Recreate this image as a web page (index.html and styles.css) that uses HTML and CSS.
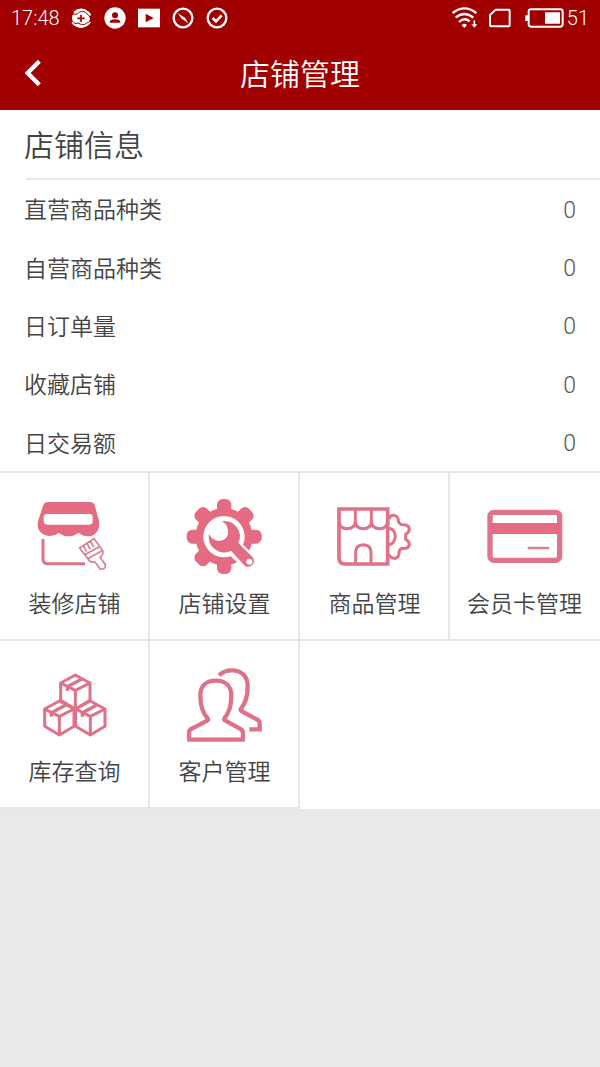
FILE: index.html
```html
<!DOCTYPE html>
<html lang="zh-CN">
<head>
<meta charset="utf-8">
<meta name="viewport" content="width=device-width, initial-scale=1">
<title>店铺管理</title>
<link rel="stylesheet" href="styles.css">
</head>
<body>
<header class="top">
  <div class="status">
    <span class="clock">17:48</span>
    <div class="notices">
      <svg class="notice" viewBox="0 0 66 66" aria-hidden="true"><circle cx="33" cy="33" r="27" fill="#fff"/><path d="M0 27Q8 20 22 21Q34 8 46 16Q56 22 66 40M0 36Q12 54 24 48Q40 58 50 48Q60 46 66 40" fill="none" stroke="#a00000" stroke-width="3"/><path d="M12 16Q26 3 44 9Q55 14 62 25M6 46Q20 63 38 60Q52 57 61 46" fill="none" stroke="#fff" stroke-width="5"/><path d="M33 23V45M22 34H44" stroke="#a00000" stroke-width="5"/></svg>
      <svg class="notice" viewBox="0 0 66 66" aria-hidden="true"><circle cx="33" cy="33" r="32" fill="#fff"/><circle cx="33" cy="25" r="9" fill="#a00000"/><path d="M17 47V44Q20 37 33 37Q46 37 49 44V47Z" fill="#a00000"/></svg>
      <svg class="notice" viewBox="0 0 66 66" aria-hidden="true"><path d="M0 5H66V61H0Z" fill="#fff"/><path d="M23 20L47 33L23 46Z" fill="#a00000"/></svg>
      <svg class="notice" viewBox="0 0 66 66" aria-hidden="true"><circle cx="33" cy="33" r="28" fill="none" stroke="#fff" stroke-width="7"/><path d="M17 18L39 32L49 48L29 35Z" fill="#fff"/></svg>
      <svg class="notice" viewBox="0 0 66 66" aria-hidden="true"><circle cx="33" cy="33" r="28" fill="none" stroke="#fff" stroke-width="7"/><path d="M20 33L30 43L47 25" fill="none" stroke="#fff" stroke-width="8"/></svg>
    </div>
    <div class="system">
      <svg class="wifi" viewBox="0 0 78 66" aria-hidden="true"><g fill="none" stroke="#fff" stroke-width="7"><path d="M2 18Q37-10 73 18M11 32Q37 10 64 32M21 45Q37 30 53 43"/><path d="M67 40V56" stroke-width="5"/></g><path d="M29 54Q37 47 45 54L37 63ZM58 52H76L67 62Z" fill="#fff"/></svg>
      <svg class="sim" viewBox="0 0 66 60" aria-hidden="true"><path d="M20 5H59Q62 5 62 8V52Q62 55 59 55H6Q3 55 3 52V21Z" fill="none" stroke="#fff" stroke-width="6"/></svg>
      <svg class="battery" viewBox="0 0 117 60" aria-hidden="true"><rect x="11" y="4" width="102" height="52" rx="7" fill="none" stroke="#fff" stroke-width="6"/><path d="M60 13H105V47H60ZM1 22H9V39H1Z" fill="#fff"/></svg>
      <span class="charge">51</span>
    </div>
  </div>
  <div class="titlebar">
    <button class="back" type="button" aria-label="返回"><svg class="chevron" viewBox="0 0 48 78" aria-hidden="true"><path d="M43 4L8 39L43 74" fill="none" stroke="#fff" stroke-width="13"/></svg></button>
    <h1 class="title">店铺管理</h1>
  </div>
</header>
<main>
  <section class="info">
    <h2 class="heading">店铺信息</h2>
    <dl class="stats">
      <div class="stat"><dt>直营商品种类</dt><dd>0</dd></div>
      <div class="stat"><dt>自营商品种类</dt><dd>0</dd></div>
      <div class="stat"><dt>日订单量</dt><dd>0</dd></div>
      <div class="stat"><dt>收藏店铺</dt><dd>0</dd></div>
      <div class="stat"><dt>日交易额</dt><dd>0</dd></div>
    </dl>
  </section>
  <nav class="menu">
    <a class="item" href="#decorate">
      <svg class="icon" viewBox="0 0 330 270" aria-hidden="true"><path fill-rule="evenodd" d="M82 36H210Q220 36 224 45L237 92Q241 126 216 137Q193 143 176 128Q161 139 145 139Q130 139 116 128Q97 144 74 135Q48 123 54 94L70 45Q74 36 82 36ZM82 72Q71 72 71 82V94Q71 104 82 104H208Q218 104 218 94V82Q218 72 208 72Z" fill="#e46b82"/><path d="M69 147V208Q69 221 82 221H195" fill="none" stroke="#e07388" stroke-width="9"/><g fill="none" stroke="#da7f91" stroke-width="5"><path d="M179 174L222 146L248 181Q252 194 240 202L256 224Q257 240 240 237L225 216Q212 220 204 207ZM194 194L238 170M203 206L246 182M191 168L199 185M202 161L210 178M212 154L221 171"/></g></svg>
      <span class="label">装修店铺</span>
    </a>
    <a class="item" href="#settings">
      <svg class="icon" viewBox="0 0 330 270" aria-hidden="true"><g fill="#e46b82"><circle cx="162" cy="140" r="86"/><rect x="141" y="27" width="43" height="225" rx="17"/><rect x="50" y="119" width="225" height="42" rx="17"/><g transform="rotate(45 162 140)"><rect x="139" y="28" width="46" height="224" rx="16"/><rect x="50" y="117" width="224" height="46" rx="16"/></g></g><circle cx="162" cy="140" r="62" fill="#fff"/><path d="M184 166L244 222" stroke="#fff" stroke-width="50"/><path d="M156 94A46 46 0 0 1 205 159L248 202Q255 212 249 223Q238 235 225 228L183 182A46 46 0 0 1 117 132Q126 151 147 153Q170 151 174 132Q177 106 156 94Z" fill="#e46b82"/><circle cx="238" cy="215" r="9" fill="#fff"/></svg>
      <span class="label">店铺设置</span>
    </a>
    <a class="item" href="#goods">
      <svg class="icon" viewBox="0 0 330 270" aria-hidden="true"><g fill="none" stroke="#df7188" stroke-width="9"><path d="M57 57H203V222H76Q57 222 57 203Z" stroke-width="11"/><path d="M57 96Q60 116 80 116Q104 116 106 96V61M106 96Q108 116 130 116Q152 116 154 96V61M154 96Q157 116 179 116Q200 116 203 96M107 222V185Q108 165 130 164Q152 165 153 185V222"/><path d="M207 87Q212 73 224 76Q235 79 236 97Q243 106 252 104Q268 104 268 119Q267 127 257 133V148Q269 155 268 165Q264 178 245 175Q235 181 237 193Q233 207 221 205Q210 203 207 193M207 115Q225 118 226 139Q224 160 207 165"/></g></svg>
      <span class="label">商品管理</span>
    </a>
    <a class="item" href="#cards">
      <svg class="icon" viewBox="0 0 330 270" aria-hidden="true"><rect x="60" y="67" width="209" height="144" rx="12" fill="none" stroke="#e1738a" stroke-width="16"/><path d="M60 99H270V132H60Z" fill="#e46b82"/><path d="M176 174H235" stroke="#da7f91" stroke-width="7" stroke-linecap="round"/></svg>
      <span class="label">会员卡管理</span>
    </a>
    <a class="item" href="#stock">
      <svg class="icon" viewBox="0 -6 330 270" aria-hidden="true"><g fill="none" stroke="#df7188" stroke-linejoin="round"><g transform="translate(122 69)"><path d="M0 0L44-24L88 0V52L44 78L0 52ZM0 0L44 22L88 0M44 22V78" stroke-width="9"/><path d="M20 11L65-13M20 11V23" stroke-width="10"/></g><g transform="translate(74 147)"><path d="M0 0L44-24L88 0V52L44 78L0 52ZM0 0L44 22L88 0M44 22V78" stroke-width="9"/><path d="M20 11L65-13M20 11V23" stroke-width="10"/></g><g transform="translate(167 147)"><path d="M0 0L44-24L88 0V52L44 78L0 52ZM0 0L44 22L88 0M44 22V78" stroke-width="9"/><path d="M20 11L65-13M20 11V23" stroke-width="10"/></g></g></svg>
      <span class="label">库存查询</span>
    </a>
    <a class="item" href="#customers">
      <svg class="icon" viewBox="0 -6 330 270" aria-hidden="true"><g fill="none" stroke="#df7188" stroke-width="13"><path d="M57 239V216Q58 209 67 205L113 181Q116 178 112 174C98 159 91 139 91 106C91 77 110 62 137 62C166 62 184 78 184 106C184 139 177 159 164 174Q160 179 166 182L210 206Q219 210 219 219V239Z" stroke-linejoin="round"/><path d="M147 46Q163 30 188 31C218 32 233 52 233 78C233 109 225 132 213 146Q210 151 216 154L260 178Q269 182 269 190V208H238"/></g></svg>
      <span class="label">客户管理</span>
    </a>
  </nav>
</main>
</body>
</html>
```
FILE: styles.css
```css
* { box-sizing: border-box; }
body {
  margin: 0;
  background: #e9e9e9;
  color: #444;
  font-family: Roboto, "Noto Sans CJK SC", sans-serif;
  font-weight: 350;
}
h1, h2, dl, dd { margin: 0; font-weight: inherit; }
.top { background: #a00000; color: #fff; }
.status {
  display: flex;
  align-items: center;
  height: 36px;
  padding: 0 11px;
  font-size: 20px;
}
.notices { display: flex; gap: 12px; margin-left: 10px; }
.notice { display: block; width: 22px; height: 22px; }
.system { display: flex; align-items: center; margin-left: auto; }
.wifi { width: 26px; height: 22px; }
.sim { width: 22px; height: 20px; margin-left: 11px; }
.battery { width: 39px; height: 20px; margin-left: 14px; }
.charge { margin-left: 3px; }
.titlebar {
  display: grid;
  grid-template-columns: 72px 1fr 72px;
  align-items: center;
  height: 74px;
}
.back {
  display: flex;
  align-items: center;
  height: 72px;
  padding: 0 0 0 25px;
  border: 0;
  background: none;
}
.chevron { width: 16px; height: 26px; }
.title { padding-top: 4px; font-size: 30px; line-height: 44px; text-align: center; }
.info { background: #fff; }
.heading {
  padding: 13px 24px 10px;
  font-size: 30px;
  line-height: 45px;
}
.stats {
  display: grid;
  grid-auto-rows: 1fr;
  min-height: 293px;
  padding-top: 1px;
  background: linear-gradient(#e7e7e7, #e7e7e7) 26px 0 / 100% 2px no-repeat;
  font-size: 23px;
}
.stat {
  display: flex;
  align-items: center;
  justify-content: space-between;
  padding: 0 24px;
}
.stat dd { padding-top: 4px; color: #555; }
.menu {
  display: grid;
  grid-template-columns: repeat(4, 1fr);
  border-top: 2px solid #e7e7e7;
  background: #fff;
}
.item {
  display: flex;
  flex-direction: column;
  align-items: center;
  height: 168px;
  padding: 17px 0 0 1px;
  border-right: 2px solid #e7e7e7;
  border-bottom: 2px solid #e7e7e7;
  color: inherit;
  text-decoration: none;
}
.item:nth-child(4n) { padding-right: 2px; border-right: 0; }
.icon { width: 110px; height: 90px; }
.label { margin-top: 8px; font-size: 23px; line-height: 34px; }
```
